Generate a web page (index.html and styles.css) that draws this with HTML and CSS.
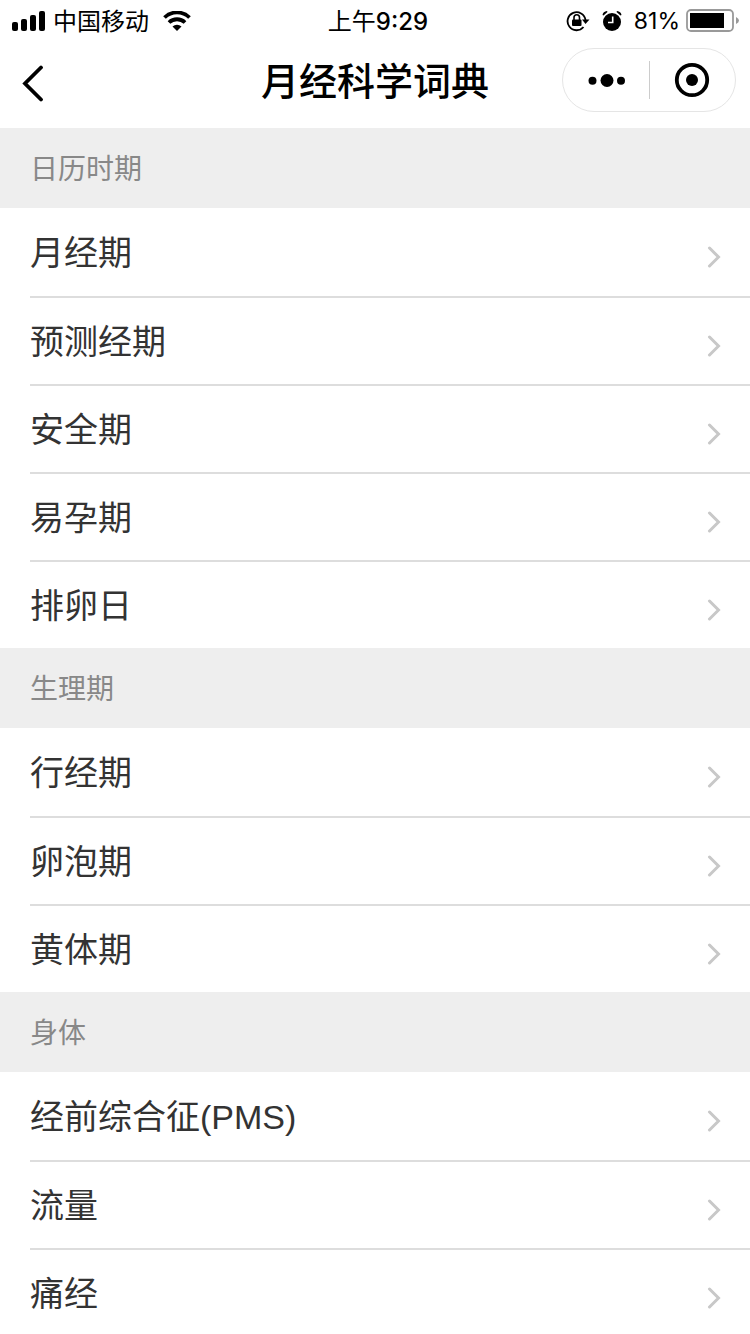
FILE: index.html
```html
<!DOCTYPE html>
<html lang="zh-CN">
<head>
    <meta charset="UTF-8">
    <meta name="viewport" content="width=device-width, initial-scale=1.0">
    <title>月经科学词典</title>
    <link rel="stylesheet" href="styles.css">
</head>
<body>
    <header>
        <div class="status">
            <div class="status-left">
                <svg width="34" height="20" viewBox="0 0 34 20">
                    <rect x="0" y="11" width="6" height="9" rx="2"/>
                    <rect x="9" y="8" width="6" height="12" rx="2"/>
                    <rect x="18" y="4" width="6" height="16" rx="2"/>
                    <rect x="27" y="0" width="6" height="20" rx="2"/>
                </svg>
                <span class="carrier">中国移动</span>
                <svg width="28" height="20" viewBox="0 0 28 20">
                    <path d="M1.500 6.500a18 18 0 0 1 25 0M6 11.500a11.500 11.500 0 0 1 16 0" fill="none" stroke="#000" stroke-width="3.800"/>
                    <path d="M9.500 15.500a7 7 0 0 1 9 0l-4.500 4.500z"/>
                </svg>
            </div>
            <time class="clock">上午<b>9:29</b></time>
            <div class="status-right">
                <svg width="24" height="22" viewBox="0 0 24 22">
                    <path d="M19.500 10a9 9 0 1 0-2 7" fill="none" stroke="#000" stroke-width="1.800"/>
                    <path d="M16 9.500h7.500l-4 4.500z"/>
                    <rect x="6" y="9.500" width="9.500" height="6.500" rx="1"/>
                    <path d="M8 10V7.500a2.700 2.700 0 0 1 5.500 0V10" fill="none" stroke="#000" stroke-width="1.600"/>
                </svg>
                <svg class="alarm" width="20" height="22" viewBox="0 0 20 22">
                    <circle cx="10" cy="12" r="9"/>
                    <path d="M0.500 5Q1 1.500 5 1l.5 1L1.500 5.500zM19.500 5Q19 1.500 15 1l-.5 1L18.500 5.500z"/>
                    <path d="M10.700 6.500v6H6" fill="none" stroke="#fff" stroke-width="1.600"/>
                </svg>
                <span class="percent">81%</span>
                <svg width="54" height="24" viewBox="0 0 54 24">
                    <rect x="1" y="1" width="46" height="21" rx="4" fill="#fff" stroke="#999" stroke-width="1.800"/>
                    <rect x="4" y="4" width="34" height="15"/>
                    <path d="M50 8q3 1.500 3 3.500t-3 3.500z" fill="#999"/>
                </svg>
            </div>
        </div>
        <nav class="navbar">
            <button class="back" aria-label="返回">
                <svg width="24" height="38" viewBox="0 0 24 38">
                    <path d="M19 3.500L3 19.500l16 16" fill="none" stroke="#000" stroke-width="3.800" stroke-linecap="round"/>
                </svg>
            </button>
            <h1>月经科学词典</h1>
            <div class="capsule">
                <button aria-label="更多">
                    <svg width="38" height="14" viewBox="0 0 38 14">
                        <circle cx="5.500" cy="7.700" r="4"/>
                        <circle cx="20" cy="7.500" r="6.500"/>
                        <circle cx="34" cy="7.700" r="4"/>
                    </svg>
                </button>
                <button aria-label="关闭">
                    <svg width="36" height="36" viewBox="0 0 36 36">
                        <circle cx="18" cy="18" r="15.200" fill="none" stroke="#000" stroke-width="3.800"/>
                        <circle cx="18" cy="18" r="6"/>
                    </svg>
                </button>
            </div>
        </nav>
    </header>
    <svg class="defs" width="0" height="0">
        <symbol id="arrow" viewBox="0 0 14 22">
            <path d="M2.500 2l9 9-9 9" fill="none" stroke="#c8c8c8" stroke-width="3" stroke-linecap="round"/>
        </symbol>
    </svg>
    <main>
        <h2>日历时期</h2>
        <ul>
            <li><a href="#">月经期<svg class="arrow"><use href="#arrow"/></svg></a></li>
            <li><a href="#">预测经期<svg class="arrow"><use href="#arrow"/></svg></a></li>
            <li><a href="#">安全期<svg class="arrow"><use href="#arrow"/></svg></a></li>
            <li><a href="#">易孕期<svg class="arrow"><use href="#arrow"/></svg></a></li>
            <li><a href="#">排卵日<svg class="arrow"><use href="#arrow"/></svg></a></li>
        </ul>
        <h2>生理期</h2>
        <ul>
            <li><a href="#">行经期<svg class="arrow"><use href="#arrow"/></svg></a></li>
            <li><a href="#">卵泡期<svg class="arrow"><use href="#arrow"/></svg></a></li>
            <li><a href="#">黄体期<svg class="arrow"><use href="#arrow"/></svg></a></li>
        </ul>
        <h2>身体</h2>
        <ul>
            <li><a href="#">经前综合征(PMS)<svg class="arrow"><use href="#arrow"/></svg></a></li>
            <li><a href="#">流量<svg class="arrow"><use href="#arrow"/></svg></a></li>
            <li><a href="#">痛经<svg class="arrow"><use href="#arrow"/></svg></a></li>
        </ul>
    </main>
</body>
</html>
```
FILE: styles.css
```css
* {
    box-sizing: border-box;
}
body {
    margin: 0;
    background-color: #fff;
    color: #333;
    font-family: "Liberation Sans", "Noto Sans CJK SC", sans-serif;
}
h1, h2, ul {
    margin: 0;
    padding: 0;
}
svg {
    display: block;
    flex: none;
}
button {
    display: flex;
    align-items: center;
    justify-content: center;
    padding: 0;
    border: none;
    background: none;
}
.defs {
    position: absolute;
}

/* status bar */
.status {
    display: grid;
    grid-template-columns: 1fr auto 1fr;
    align-items: center;
    height: 40px;
    padding: 0 10px 0 12px;
    color: #000;
    font-family: Inter, "Noto Sans CJK SC", sans-serif;
    font-size: 24px;
    line-height: 40px;
}
.status-left, .status-right {
    display: flex;
    align-items: center;
}
.status-right {
    justify-content: flex-end;
}
.carrier, .clock {
    padding-top: 2px;
}
.carrier {
    margin: 0 14px 0 7px;
}
.clock {
    padding-left: 4px;
}
.clock b {
    font-weight: 500;
}
.alarm {
    margin: 0 12px;
}
.percent {
    font-size: 23px;
    margin-right: 6px;
}

/* title bar */
.navbar {
    display: grid;
    grid-template-columns: 1fr auto 1fr;
    align-items: center;
    height: 88px;
    padding: 0 14px 8px;
    color: #000;
}
.back {
    justify-self: start;
    width: 40px;
    height: 64px;
    padding-top: 6px;
}
h1 {
    padding-top: 4px;
    font-size: 38px;
    font-weight: 500;
    line-height: 64px;
}
.capsule {
    display: flex;
    justify-self: end;
    width: 174px;
    height: 64px;
    padding: 12px 0;
    border: 1px solid #e5e5e5;
    border-radius: 32px;
}
.capsule button {
    flex: 1;
}
.capsule button + button {
    border-left: 1px solid #ccc;
}

/* list */
h2 {
    height: 80px;
    padding: 2px 0 0 30px;
    background-color: #eee;
    color: #888;
    font-size: 28px;
    font-weight: 400;
    line-height: 80px;
}
ul {
    padding-left: 30px;
    list-style: none;
}
li {
    height: 88px;
}
li + li {
    border-top: 2px solid #ddd;
}
a {
    display: flex;
    align-items: center;
    justify-content: space-between;
    height: 100%;
    padding: 0 29px 3px 0;
    color: #333;
    font-size: 34px;
    text-decoration: none;
}
.arrow {
    width: 14px;
    height: 22px;
    margin-top: 12px;
}
```
